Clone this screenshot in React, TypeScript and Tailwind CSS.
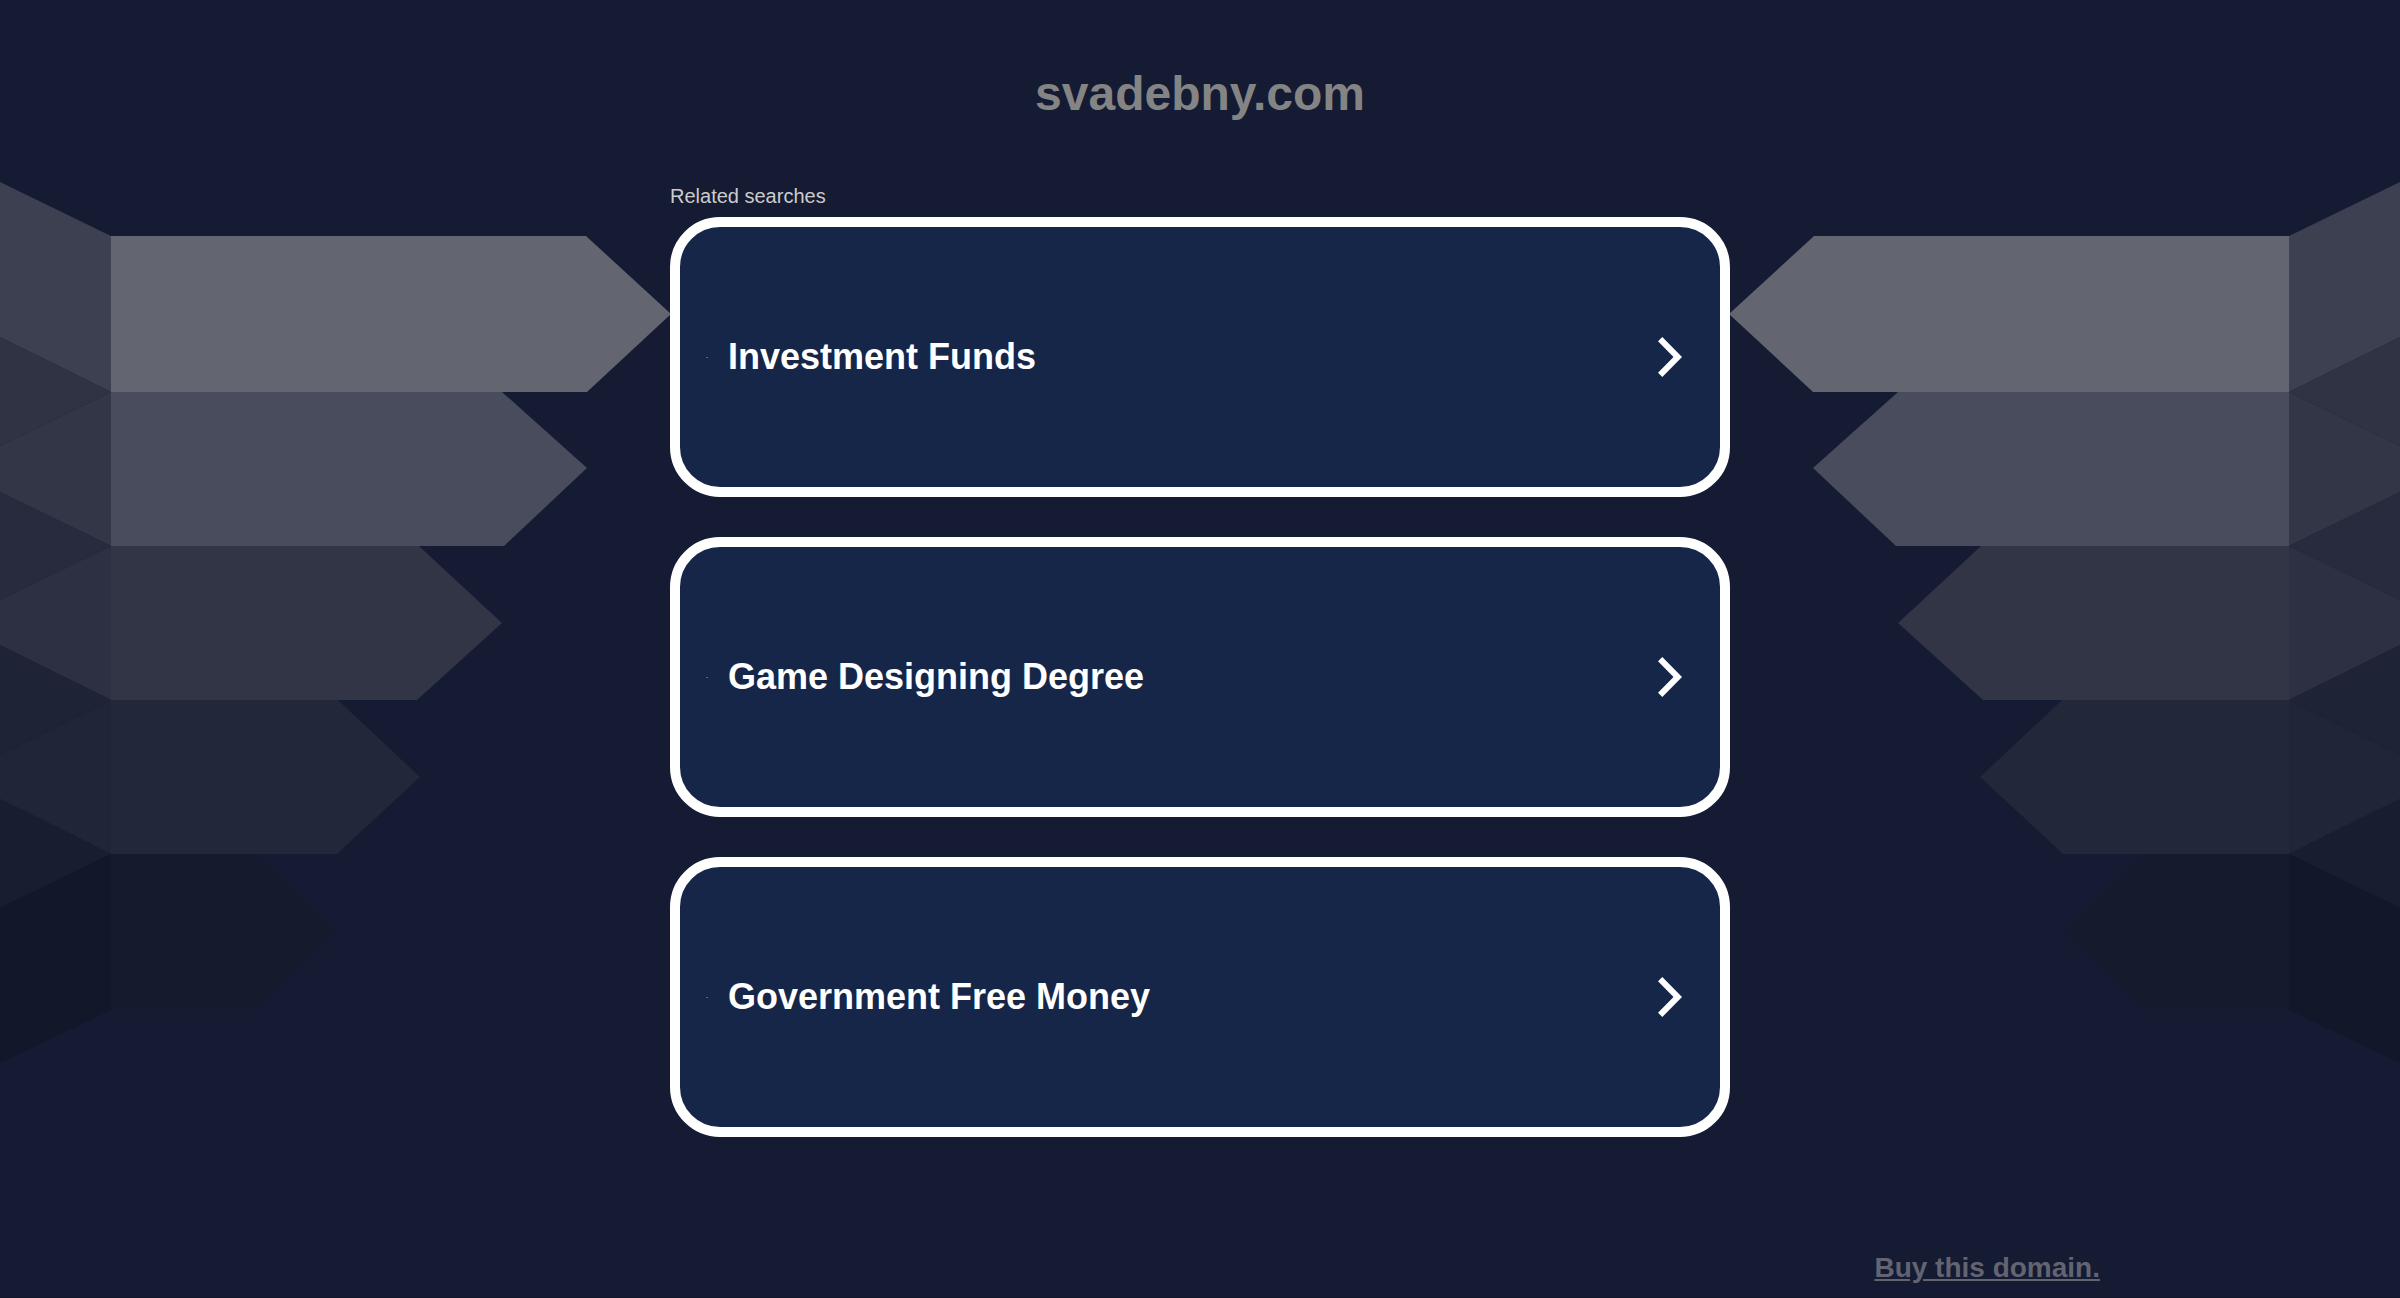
const searches = ["Investment Funds", "Game Designing Degree", "Government Free Money"];

const shapes: { fill: string; points: string }[] = [
  { fill: "#3d4051", points: "0,182 111,236 111,392 0,337" },
  { fill: "#303344", points: "0,337 111,392 0,446" },
  { fill: "#333646", points: "111,392 111,546 0,492 0,446" },
  { fill: "#282b3e", points: "0,492 111,546 0,600" },
  { fill: "#2d3042", points: "111,546 111,700 0,645 0,600" },
  { fill: "#1e2335", points: "0,645 111,700 0,755" },
  { fill: "#202537", points: "111,700 111,854 0,799 0,755" },
  { fill: "#181d2f", points: "0,799 111,854 0,908" },
  { fill: "#12182a", points: "111,854 111,1010 0,1063 0,908" },
  { fill: "#636571", points: "111,236 586,236 671,314 587,392 111,392" },
  { fill: "#494c5c", points: "111,392 502,392 587,468 504,546 111,546" },
  { fill: "#323545", points: "111,546 419,546 502,623 417,700 111,700" },
  { fill: "#222739", points: "111,700 338,700 420,777 337,854 111,854" },
  { fill: "#151a2c", points: "111,854 255,854 337,932 254,1010 111,1010" },
];

function Arrows({ mirrored = false }: { mirrored?: boolean }) {
  return (
    <svg
      className={mirrored ? "shrink-0 -scale-x-100" : "shrink-0"}
      width="671"
      height="1080"
      viewBox="0 0 671 1080"
    >
      {shapes.map((s) => (
        <polygon key={s.points} points={s.points} fill={s.fill} />
      ))}
    </svg>
  );
}

function Chevron() {
  return (
    <svg className="shrink-0" width="24" height="40" viewBox="0 0 24 40" fill="currentColor" aria-hidden="true">
      <path d="M4.3 0 24 20 4.3 40 0 35.7 15.5 20 0 4.3Z" />
    </svg>
  );
}

export default function App() {
  return (
    <div className="relative flex min-h-screen flex-col overflow-hidden border-b border-[#10162b] bg-[#141b33] font-['Liberation_Sans',Arial,sans-serif]">
      <div className="absolute inset-0 flex justify-between" aria-hidden="true">
        <Arrows />
        <Arrows mirrored />
      </div>

      <header className="relative px-5 pt-16 text-center">
        <h1 className="text-[48px] leading-[60px] font-bold text-[#848484]">svadebny.com</h1>
      </header>

      <main className="relative mx-auto w-full max-w-[1060px] pt-[60px]">
        <h2 className="text-[20px] leading-6 text-[#cccccc]">Related searches</h2>
        <ul className="mt-[9px] flex flex-col gap-10">
          {searches.map((label) => (
            <li key={label}>
              <a
                href="#"
                className="flex min-h-[280px] items-center rounded-[50px] border-10 border-white bg-[#162649] pr-[38px] pl-[26px] text-white"
              >
                <span className="h-px w-[2px] shrink-0 bg-[#5c6780]" />
                <span className="ml-5 flex-1 text-[36px] leading-[44px] font-bold">{label}</span>
                <Chevron />
              </a>
            </li>
          ))}
        </ul>
      </main>

      <footer className="relative mx-auto mt-auto w-full max-w-[1800px] pb-[13px] text-right">
        <a href="#" className="text-[28px] leading-8 font-bold text-[#626471] underline">
          Buy this domain.
        </a>
      </footer>
    </div>
  );
}
